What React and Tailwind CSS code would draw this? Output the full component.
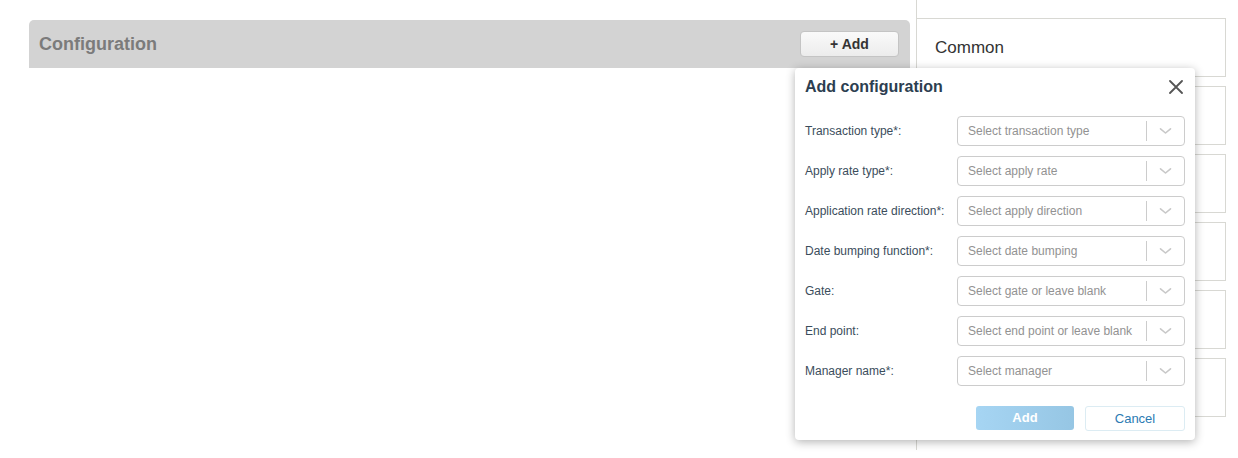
const fields = [
    { label: "Transaction type*:", placeholder: "Select transaction type" },
    { label: "Apply rate type*:", placeholder: "Select apply rate" },
    { label: "Application rate direction*:", placeholder: "Select apply direction" },
    { label: "Date bumping function*:", placeholder: "Select date bumping" },
    { label: "Gate:", placeholder: "Select gate or leave blank" },
    { label: "End point:", placeholder: "Select end point or leave blank" },
    { label: "Manager name*:", placeholder: "Select manager" },
]

const SelectBox = ({ placeholder }) => (
    <div className="flex items-center w-[228px] h-[30px] border border-[#cccccc] rounded-[4px] bg-white">
        <span className="flex-1 pl-[10px] text-[12px] text-[#929292] truncate">{placeholder}</span>
        <span className="w-px h-[20px] bg-[#cccccc]" />
        <span className="w-[37px] flex justify-center">
            <svg width="13" height="8" viewBox="0 0 13 8" fill="none">
                <path d="M1.5 1.8 L6.5 6 L11.5 1.8" stroke="#c8c8c8" strokeWidth="1.6" strokeLinecap="round" strokeLinejoin="round" />
            </svg>
        </span>
    </div>
)

const App = () => {
    return (
        <div
            className="relative w-[1238px] h-[458px] bg-white flex overflow-hidden"
            style={{ fontFamily: '"Liberation Sans", Arial, sans-serif' }}
        >
            <div className="w-[910px] pl-[29px] pt-[20px]">
                <div className="h-[48px] bg-[#d3d3d3] rounded-t-[5px] flex items-center justify-between pl-[10px] pr-[11px]">
                    <h2 className="text-[18px] font-bold text-[#7b7b7b]">Configuration</h2>
                    <button className="w-[99px] h-[26px] rounded-[4px] border border-[#c4c4c4] bg-gradient-to-b from-[#fafafa] to-[#ececec] text-[14px] font-bold text-[#333333]">
                        + Add
                    </button>
                </div>
            </div>

            <div className="ml-[6px] h-[450px] border-l border-[#d8d8d3] pt-[18px] flex flex-col gap-[9px]">
                {["Common", "", "", "", "", ""].map((title, i) => (
                    <div key={i} className="-ml-px w-[310px] h-[59px] border border-[#d8d8d3] flex items-center pl-[18px]">
                        <span className="text-[17px] text-[#333333]">{title}</span>
                    </div>
                ))}
            </div>

            <div className="absolute left-[795px] top-[68px] w-[400px] h-[372px] bg-white rounded-[4px] shadow-[0_2px_10px_rgba(0,0,0,0.3)] px-[10px] flex flex-col">
                <div className="h-[37px] pt-[1px] flex items-center justify-between">
                    <h3 className="text-[16px] font-bold text-[#2c3e50]">Add configuration</h3>
                    <button className="w-[16px] h-[16px] flex items-center justify-center mr-[1px]">
                        <svg width="14" height="14" viewBox="0 0 14 14">
                            <path d="M1 1 L13 13 M13 1 L1 13" stroke="#555555" strokeWidth="1.8" strokeLinecap="round" />
                        </svg>
                    </button>
                </div>

                <div className="mt-[11px] flex flex-col gap-[10px]">
                    {fields.map((f) => (
                        <div key={f.label} className="flex items-center">
                            <label className="w-[152px] text-[12px] text-[#3b4d5c]">{f.label}</label>
                            <SelectBox placeholder={f.placeholder} />
                        </div>
                    ))}
                </div>

                <div className="mt-[20px] flex justify-end gap-[11px]">
                    <button className="w-[98px] h-[24px] rounded-[3px] bg-gradient-to-r from-[#a6d5f3] to-[#96c6e4] text-[13px] font-bold text-white">
                        Add
                    </button>
                    <button className="w-[100px] h-[25px] rounded-[3px] border border-[#dcecf3] bg-white text-[13px] text-[#2b7bb3]">
                        Cancel
                    </button>
                </div>
            </div>
        </div>
    )
}

export default App
